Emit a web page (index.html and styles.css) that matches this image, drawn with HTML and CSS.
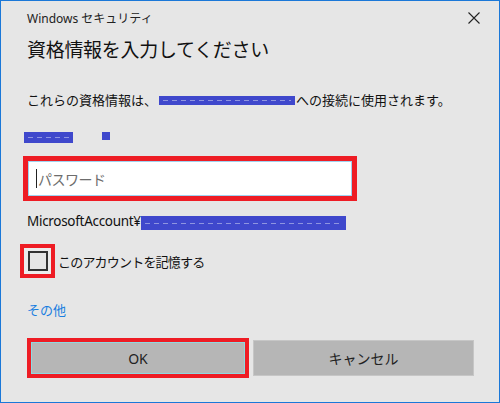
FILE: index.html
```html
<!DOCTYPE html>
<html lang="ja">
  <head>
    <meta charset="UTF-8" />
    <title>Windows セキュリティ</title>
    <link rel="stylesheet" href="styles.css">
  </head>
  <body>
    <div class="dialog">
      <div class="titlebar">
        <span class="caption">Windows セキュリティ</span>
        <svg class="close" width="12" height="12" viewBox="0 0 12 12">
          <path d="M0.5 0.5 L11.5 11.5 M11.5 0.5 L0.5 11.5" stroke="#222" stroke-width="1.1" fill="none"/>
        </svg>
      </div>

      <h1 class="heading">資格情報を入力してください</h1>

      <p class="desc">これらの資格情報は、<span class="redact redact-host"></span>への接続に使用されます。</p>

      <div class="user-row">
        <span class="redact redact-user"></span>
        <span class="redact redact-dot"></span>
      </div>

      <div class="mark mark-password">
        <div class="password">
          <span class="caret"></span>
          <span class="placeholder">パスワード</span>
        </div>
      </div>

      <p class="account">MicrosoftAccount¥<span class="redact redact-mail"></span></p>

      <label class="remember">
        <span class="mark mark-check"><span class="checkbox"></span></span>
        <span class="remember-text">このアカウントを記憶する</span>
      </label>

      <a class="more" href="#">その他</a>

      <div class="buttons">
        <div class="mark mark-ok"><button class="btn btn-ok" type="button">OK</button></div>
        <button class="btn btn-cancel" type="button">キャンセル</button>
      </div>
    </div>
  </body>
</html>
```

FILE: styles.css
```css
html, body {
  margin: 0;
  padding: 0;
}

* {
  box-sizing: border-box;
}

body {
  font-family: "Noto Sans", "Noto Sans CJK JP", sans-serif;
  color: #111;
  background: #fff;
}

.dialog {
  width: 500px;
  height: 403px;
  border: 1px solid #1b78d8;
  background: #e6e6e6;
  padding: 0 0 0 26px;
}

.titlebar {
  display: flex;
  align-items: center;
  justify-content: space-between;
  height: 34px;
  padding-right: 19px;
}

.caption {
  font-size: 12px;
  color: #222;
}

.close {
  display: block;
}

.heading {
  margin: 1px 0 0 0;
  font-size: 19px;
  font-weight: normal;
  line-height: 28px;
  color: #111;
  letter-spacing: -0.3px;
}

.desc {
  margin: 26px 0 0 0;
  font-size: 13px;
  line-height: 20px;
  display: flex;
  align-items: center;
}

.redact {
  display: inline-block;
  background: #3f48cc;
  background-image: repeating-linear-gradient(90deg, #8f95e0 0 5px, transparent 5px 9px);
  background-size: calc(100% - 8px) 1px;
  background-repeat: no-repeat;
  background-position: 4px 50%;
}

.redact-host {
  width: 136px;
  height: 9px;
  margin: 0 1px 0 2px;
}

.user-row {
  display: flex;
  align-items: flex-start;
  margin: 22px 0 0 -3px;
  height: 12px;
}

.redact-user {
  width: 49px;
  height: 11px;
}

.redact-dot {
  width: 8px;
  height: 8px;
  margin-left: 29px;
  background-image: none;
}

.mark {
  border: 5px solid #ee1c24;
}

.mark-password {
  width: 334px;
  height: 45px;
  margin: 12px 0 0 -4px;
  padding: 1px;
  background: #9fd3f0;
}

.password {
  display: flex;
  align-items: center;
  width: 100%;
  height: 100%;
  background: #fff;
  padding: 0 0 0 7px;
  font-family: "Noto Sans CJK JP", sans-serif;
  font-size: 14px;
}

.caret {
  display: block;
  width: 1px;
  height: 19px;
  background: #222;
  margin-right: 1px;
}

.placeholder {
  color: #6d6d6d;
  letter-spacing: -0.5px;
}

.account {
  margin: 10px 0 0 0;
  font-size: 13.5px;
  line-height: 20px;
  display: flex;
  align-items: center;
  letter-spacing: -0.3px;
}

.redact-mail {
  width: 205px;
  height: 14px;
  margin-top: 4px;
}

.remember {
  display: flex;
  align-items: center;
  margin: 13px 0 0 -7px;
}

.mark-check {
  width: 35px;
  height: 34px;
  border-width: 4px;
  background: #ececec;
  display: flex;
  align-items: center;
  justify-content: center;
}

.checkbox {
  display: block;
  width: 20px;
  height: 20px;
  border: 2px solid #333;
  background: #e6e6e6;
}

.remember-text {
  margin-left: 3px;
  font-size: 13px;
  letter-spacing: -0.8px;
}

.more {
  display: block;
  margin: 22px 0 0 0;
  font-size: 13px;
  line-height: 20px;
  color: #1a7ee0;
  text-decoration: none;
}

.buttons {
  display: flex;
  align-items: center;
  margin: 18px 0 0 0;
}

.btn {
  font-family: "Noto Sans", "Noto Sans CJK JP", sans-serif;
  font-size: 14px;
  color: #222;
  background: #b6b6b6;
  border: 1px solid #c6c6c6;
  padding: 0;
}

.mark-ok {
  width: 222px;
  height: 40px;
  border-width: 4px;
  padding: 0;
  background: #8fd8e0;
}

.btn-ok {
  display: block;
  width: 100%;
  height: 100%;
  border-color: #8fd8e0;
}

.btn-cancel {
  width: 221px;
  height: 36px;
  margin-left: 4px;
}
```
